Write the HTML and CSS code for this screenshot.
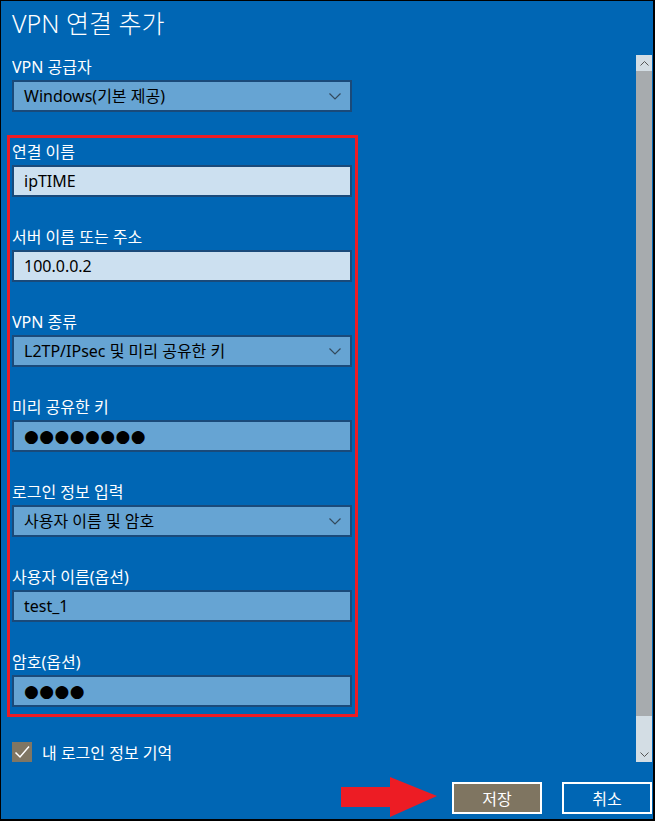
FILE: index.html
```html
<!DOCTYPE html>
<html lang="ko">

<head>
    <meta charset="UTF-8">
    <meta name="viewport" content="width=device-width, initial-scale=1.0">
    <title>VPN 연결 추가</title>
    <link rel="stylesheet" href="styles.css">
</head>

<body>
    <div class="janela">
        <h1 class="titulo">VPN 연결 추가</h1>

        <div class="area-rolagem">
            <div class="formulario">
                <div class="grupo">
                    <div class="rotulo">VPN 공급자</div>
                    <div class="caixa lista">
                        <span>Windows(기본 제공)</span>
                        <svg class="seta" width="12" height="7" viewBox="0 0 12 7"><polyline points="0.5,0.5 6,6 11.5,0.5" fill="none" stroke="#34495c" stroke-width="1.2"/></svg>
                    </div>
                </div>

                <div class="destaque">
                    <div class="grupo">
                        <div class="rotulo">연결 이름</div>
                        <div class="caixa claro">ipTIME</div>
                    </div>
                    <div class="grupo">
                        <div class="rotulo">서버 이름 또는 주소</div>
                        <div class="caixa claro">100.0.0.2</div>
                    </div>
                    <div class="grupo">
                        <div class="rotulo">VPN 종류</div>
                        <div class="caixa lista">
                            <span>L2TP/IPsec 및 미리 공유한 키</span>
                            <svg class="seta" width="12" height="7" viewBox="0 0 12 7"><polyline points="0.5,0.5 6,6 11.5,0.5" fill="none" stroke="#34495c" stroke-width="1.2"/></svg>
                        </div>
                    </div>
                    <div class="grupo">
                        <div class="rotulo">미리 공유한 키</div>
                        <div class="caixa senha">●●●●●●●●</div>
                    </div>
                    <div class="grupo">
                        <div class="rotulo">로그인 정보 입력</div>
                        <div class="caixa lista">
                            <span>사용자 이름 및 암호</span>
                            <svg class="seta" width="12" height="7" viewBox="0 0 12 7"><polyline points="0.5,0.5 6,6 11.5,0.5" fill="none" stroke="#34495c" stroke-width="1.2"/></svg>
                        </div>
                    </div>
                    <div class="grupo">
                        <div class="rotulo">사용자 이름(옵션)</div>
                        <div class="caixa">test_1</div>
                    </div>
                    <div class="grupo ultimo">
                        <div class="rotulo">암호(옵션)</div>
                        <div class="caixa senha">●●●●</div>
                    </div>
                </div>

                <div class="lembrar">
                    <span class="marca">
                        <svg width="20" height="20" viewBox="0 0 20 20"><polyline points="3.5,10.5 8,15 17,4.5" fill="none" stroke="#fff" stroke-width="1.5"/></svg>
                    </span>
                    <span>내 로그인 정보 기억</span>
                </div>
            </div>

            <div class="rolagem">
                <div class="botao-rolagem">
                    <svg width="9" height="5" viewBox="0 0 9 5"><polyline points="0.5,4.5 4.5,0.5 8.5,4.5" fill="none" stroke="#555" stroke-width="1"/></svg>
                </div>
                <div class="polegar"></div>
                <div class="trilho"></div>
                <div class="botao-rolagem">
                    <svg width="9" height="5" viewBox="0 0 9 5"><polyline points="0.5,0.5 4.5,4.5 8.5,0.5" fill="none" stroke="#555" stroke-width="1"/></svg>
                </div>
            </div>
        </div>

        <div class="rodape">
            <svg class="flecha" width="96" height="40" viewBox="0 0 96 40"><polygon points="0,10 49,10 49,0 96,19 49,40 49,30 0,30" fill="#ed1c24"/></svg>
            <button class="botao salvar">저장</button>
            <button class="botao">취소</button>
        </div>
    </div>
</body>

</html>
```

FILE: styles.css
```css
body {
    margin: 0;
    font-family: "Noto Sans", "Noto Sans CJK KR", sans-serif;
}

.janela {
    width: 655px;
    height: 821px;
    box-sizing: border-box;
    border-style: solid;
    border-color: #000;
    border-width: 1px 2px 2px 1px;
    background-color: #0066b4;
    color: #fff;
    display: flex;
    flex-direction: column;
}

.titulo {
    margin: 0;
    height: 54px;
    padding-left: 11px;
    font-size: 25px;
    font-weight: 300;
    line-height: 44px;
    overflow: hidden;
}

.area-rolagem {
    display: flex;
    height: 707px;
}

.formulario {
    flex: 1;
    padding: 2px 0 0 11px;
}

.grupo {
    width: 340px;
    margin-bottom: 30px;
}

.grupo.ultimo {
    margin-bottom: 0;
}

.formulario > .grupo {
    margin-bottom: 23px;
}

.rotulo {
    height: 23px;
    font-size: 16px;
    line-height: 21px;
    overflow: hidden;
}

.caixa {
    height: 32px;
    box-sizing: border-box;
    border: 2px solid #1a4a7a;
    background-color: #66a4d3;
    color: #000;
    font-size: 16px;
    line-height: 28px;
    padding: 0 10px;
    overflow: hidden;
}

.caixa.claro {
    background-color: #cce0f0;
}

.lista {
    display: flex;
    justify-content: space-between;
    align-items: center;
}

.seta {
    margin-right: -1px;
}

.senha {
    font-family: "DejaVu Sans", sans-serif;
    font-size: 17px;
    letter-spacing: 0.4px;
}

.destaque {
    width: 340px;
    margin-left: -5px;
    padding: 4px 3px 7px 2px;
    border: 3px solid #ed1c24;
}

.lembrar {
    display: flex;
    align-items: center;
    margin-top: 23px;
    font-size: 16px;
}

.marca {
    width: 20px;
    height: 20px;
    margin-right: 10px;
    background-color: #807663;
    display: flex;
}

.rolagem {
    width: 16px;
    margin-right: 1px;
    display: flex;
    flex-direction: column;
}

.botao-rolagem {
    height: 16px;
    background-color: #d3dde4;
    display: flex;
    justify-content: center;
    align-items: center;
}

.polegar {
    height: 645px;
    background-color: #a7abae;
}

.trilho {
    flex: 1;
    background-color: #d3dde4;
}

.rodape {
    flex: 1;
    display: flex;
    justify-content: flex-end;
    align-items: flex-start;
    padding: 20px 1px 0 0;
}

.flecha {
    margin: -5px 15px 0 0;
}

.botao {
    width: 90px;
    height: 32px;
    margin-left: 20px;
    border: 2px solid #fff;
    background-color: #0066b4;
    color: #fff;
    font-family: "Noto Sans", "Noto Sans CJK KR", sans-serif;
    font-size: 16px;
    cursor: pointer;
}

.botao.salvar {
    margin-left: 0;
    background-color: #7f7561;
}
```
